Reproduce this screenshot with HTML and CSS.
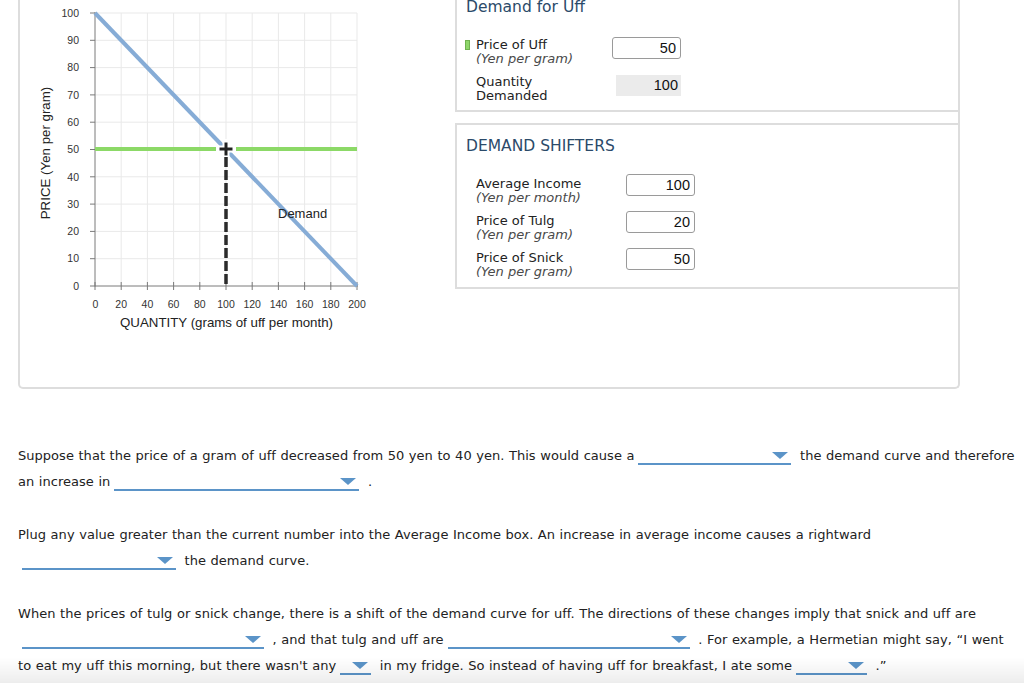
FILE: index.html
```html
<!DOCTYPE html>
<html lang="en">
<head>
<meta charset="utf-8">
<title>Demand for Uff</title>
<link rel="stylesheet" href="styles.css">
</head>
<body>
<div class="page">
  <div class="panel">
    <div class="chart">
      <svg width="435" height="387" viewBox="20 0 435 387" xmlns="http://www.w3.org/2000/svg">
        <g class="grid">
          <line x1="121.2" y1="13" x2="121.2" y2="286"/>
          <line x1="147.4" y1="13" x2="147.4" y2="286"/>
          <line x1="173.6" y1="13" x2="173.6" y2="286"/>
          <line x1="199.8" y1="13" x2="199.8" y2="286"/>
          <line x1="226" y1="13" x2="226" y2="286"/>
          <line x1="252.2" y1="13" x2="252.2" y2="286"/>
          <line x1="278.4" y1="13" x2="278.4" y2="286"/>
          <line x1="304.6" y1="13" x2="304.6" y2="286"/>
          <line x1="330.8" y1="13" x2="330.8" y2="286"/>
          <line x1="357" y1="13" x2="357" y2="286"/>
          <line x1="95" y1="13" x2="357" y2="13"/>
          <line x1="95" y1="40.3" x2="357" y2="40.3"/>
          <line x1="95" y1="67.6" x2="357" y2="67.6"/>
          <line x1="95" y1="94.9" x2="357" y2="94.9"/>
          <line x1="95" y1="122.2" x2="357" y2="122.2"/>
          <line x1="95" y1="149.5" x2="357" y2="149.5"/>
          <line x1="95" y1="176.8" x2="357" y2="176.8"/>
          <line x1="95" y1="204.1" x2="357" y2="204.1"/>
          <line x1="95" y1="231.4" x2="357" y2="231.4"/>
          <line x1="95" y1="258.7" x2="357" y2="258.7"/>
        </g>
        <g class="axis">
          <line x1="95" y1="12" x2="95" y2="286.5"/>
          <line x1="95" y1="286" x2="358" y2="286"/>
          <line x1="90" y1="13" x2="95" y2="13"/>
          <line x1="90" y1="40.3" x2="95" y2="40.3"/>
          <line x1="90" y1="67.6" x2="95" y2="67.6"/>
          <line x1="90" y1="94.9" x2="95" y2="94.9"/>
          <line x1="90" y1="122.2" x2="95" y2="122.2"/>
          <line x1="90" y1="149.5" x2="95" y2="149.5"/>
          <line x1="90" y1="176.8" x2="95" y2="176.8"/>
          <line x1="90" y1="204.1" x2="95" y2="204.1"/>
          <line x1="90" y1="231.4" x2="95" y2="231.4"/>
          <line x1="90" y1="258.7" x2="95" y2="258.7"/>
          <line x1="90" y1="286" x2="95" y2="286"/>
          <line x1="95" y1="282" x2="95" y2="290"/>
          <line x1="121.2" y1="282" x2="121.2" y2="290"/>
          <line x1="147.4" y1="282" x2="147.4" y2="290"/>
          <line x1="173.6" y1="282" x2="173.6" y2="290"/>
          <line x1="199.8" y1="282" x2="199.8" y2="290"/>
          <line x1="226" y1="282" x2="226" y2="290"/>
          <line x1="252.2" y1="282" x2="252.2" y2="290"/>
          <line x1="278.4" y1="282" x2="278.4" y2="290"/>
          <line x1="304.6" y1="282" x2="304.6" y2="290"/>
          <line x1="330.8" y1="282" x2="330.8" y2="290"/>
          <line x1="357" y1="282" x2="357" y2="290"/>
        </g>
        <g class="ticks-y">
          <text x="79" y="16.7">100</text>
          <text x="79" y="44">90</text>
          <text x="79" y="71.3">80</text>
          <text x="79" y="98.6">70</text>
          <text x="79" y="125.9">60</text>
          <text x="79" y="153.2">50</text>
          <text x="79" y="180.5">40</text>
          <text x="79" y="207.8">30</text>
          <text x="79" y="235.1">20</text>
          <text x="79" y="262.4">10</text>
          <text x="79" y="289.7">0</text>
        </g>
        <g class="ticks-x">
          <text x="95.5" y="307.5">0</text>
          <text x="121.2" y="307.5">20</text>
          <text x="147.4" y="307.5">40</text>
          <text x="173.6" y="307.5">60</text>
          <text x="199.8" y="307.5">80</text>
          <text x="226" y="307.5">100</text>
          <text x="252.2" y="307.5">120</text>
          <text x="278.4" y="307.5">140</text>
          <text x="304.6" y="307.5">160</text>
          <text x="330.8" y="307.5">180</text>
          <text x="357" y="307.5">200</text>
        </g>
        <text class="axis-title" x="226.5" y="326.5">QUANTITY (grams of uff per month)</text>
        <text class="axis-title" transform="translate(50 153) rotate(-90)">PRICE (Yen per gram)</text>
        <line class="demand" x1="95" y1="13" x2="357" y2="286"/>
        <line class="price" x1="95" y1="149" x2="357" y2="149"/>
        <text class="curve-label" x="278" y="217.5">Demand</text>
        <line class="halo" x1="216" y1="149" x2="236" y2="149"/>
        <line class="halo" x1="226" y1="139" x2="226" y2="159"/>
        <line class="dash" x1="226" y1="157" x2="226" y2="286"/>
        <line class="cross" x1="219.5" y1="149" x2="232.5" y2="149"/>
        <line class="cross" x1="226" y1="142.5" x2="226" y2="155.5"/>
      </svg>
    </div>
    <div class="side">
      <section class="box box-uff">
        <h2 class="box-title">Demand for Uff</h2>
        <div class="row row-first">
          <div class="label label-wide label-price marked">
            <span class="name">Price of Uff</span>
            <span class="unit">(Yen per gram)</span>
          </div>
          <input class="num" type="text" value="50">
        </div>
        <div class="row row-qty">
          <div class="label label-wide label-qty">
            <span class="name">Quantity</span>
            <span class="name name-second">Demanded</span>
          </div>
          <div class="readout">100</div>
        </div>
      </section>
      <section class="box box-shift">
        <h2 class="box-title">DEMAND SHIFTERS</h2>
        <div class="row row-first">
          <div class="label label-shift">
            <span class="name">Average Income</span>
            <span class="unit">(Yen per month)</span>
          </div>
          <input class="num" type="text" value="100">
        </div>
        <div class="row row-next">
          <div class="label label-shift">
            <span class="name">Price of Tulg</span>
            <span class="unit">(Yen per gram)</span>
          </div>
          <input class="num" type="text" value="20">
        </div>
        <div class="row row-next">
          <div class="label label-shift">
            <span class="name">Price of Snick</span>
            <span class="unit">(Yen per gram)</span>
          </div>
          <input class="num" type="text" value="50">
        </div>
      </section>
    </div>
  </div>

  <div class="questions">
    <p>Suppose that the price of a gram of uff decreased from 50 yen to 40 yen. This would cause a<span class="dd dd-153"><svg viewBox="0 0 16 7"><polygon points="0,0 16,0 8,7"/></svg></span> the demand curve and therefore an increase in<span class="dd dd-245"><svg viewBox="0 0 16 7"><polygon points="0,0 16,0 8,7"/></svg></span> .</p>
    <p>Plug any value greater than the current number into the Average Income box. An increase in average income causes a rightward <span class="dd dd-154"><svg viewBox="0 0 16 7"><polygon points="0,0 16,0 8,7"/></svg></span> the demand curve.</p>
    <p>When the prices of tulg or snick change, there is a shift of the demand curve for uff. The directions of these changes imply that snick and uff are <span class="dd dd-242"><svg viewBox="0 0 16 7"><polygon points="0,0 16,0 8,7"/></svg></span> , and that tulg and uff are<span class="dd dd-242"><svg viewBox="0 0 16 7"><polygon points="0,0 16,0 8,7"/></svg></span> . For example, a Hermetian might say, “I went to eat my uff this morning, but there wasn't any<span class="dd dd-31"><svg viewBox="0 0 16 7"><polygon points="0,0 16,0 8,7"/></svg></span> in my fridge. So instead of having uff for breakfast, I ate some<span class="dd dd-71"><svg viewBox="0 0 16 7"><polygon points="0,0 16,0 8,7"/></svg></span> .”</p>
  </div>
</div>
<div class="bottom-shade"></div>
</body>
</html>
```
FILE: styles.css
```css
html, body {
  margin: 0;
  padding: 0;
  background: #ffffff;
}

body {
  font-family: "DejaVu Sans", Verdana, sans-serif;
  color: #222222;
}

.page {
  padding: 0 4px 0 18px;
}

/* ---------- top panel ---------- */
.panel {
  width: 942px;
  height: 389px;
  box-sizing: border-box;
  border: 2px solid #dddddd;
  border-top: 0;
  border-radius: 0 0 5px 5px;
  display: flex;
}

.chart svg {
  display: block;
}

.grid line {
  stroke: #e9e9e9;
  stroke-width: 1;
}

.axis line {
  stroke: #7a7a7a;
  stroke-width: 1;
}

.ticks-y text,
.ticks-x text {
  font-family: "Liberation Sans", Arial, sans-serif;
  font-size: 10.5px;
  fill: #333333;
}

.ticks-y text {
  text-anchor: end;
}

.ticks-x text {
  text-anchor: middle;
}

.axis-title {
  font-family: "Liberation Sans", Arial, sans-serif;
  font-size: 13.3px;
  fill: #222222;
  text-anchor: middle;
}

.curve-label {
  font-family: "Liberation Sans", Arial, sans-serif;
  font-size: 13px;
  fill: #222222;
}

.demand {
  stroke: #86acd6;
  stroke-width: 4;
}

.price {
  stroke: #8cd967;
  stroke-width: 4;
}

.halo {
  stroke: #ffffff;
  stroke-width: 7;
}

.dash {
  stroke: #2b2b2b;
  stroke-width: 3.5;
  stroke-dasharray: 10 3;
}

.cross {
  stroke: #222222;
  stroke-width: 3;
}

/* ---------- right column ---------- */
.side {
  width: 503px;
}

.box {
  box-sizing: border-box;
  border: 2px solid #dddddd;
  border-right: 0;
}

.box-uff {
  border-top: 0;
  height: 114px;
}

.box-shift {
  margin-top: 11px;
  height: 166px;
  padding-top: 12px;
}

.box-title {
  margin: 0 0 0 9px;
  font-size: 15.5px;
  line-height: 18px;
  font-weight: normal;
  color: #2b4a69;
}

.box-uff .box-title {
  margin-top: -2px;
}

.row {
  display: flex;
  align-items: flex-start;
  height: 22px;
  padding-left: 19px;
}

.box-uff .row-first {
  margin-top: 21px;
}

.box-uff .row-qty {
  margin-top: 16px;
}

.box-shift .row-first {
  margin-top: 19px;
}

.box-shift .row-next {
  margin-top: 15px;
}

.label {
  font-size: 13px;
  position: relative;
  flex: none;
}

.label-wide {
  width: 136px;
}

.label-price {
  margin-top: 2px;
}

.label-shift {
  width: 150px;
  margin-top: 4px;
}

.label-qty {
  margin-top: 1px;
}

.name,
.unit {
  display: block;
  line-height: 12px;
  white-space: nowrap;
}

.name {
  color: #222222;
}

.name-second {
  margin-top: 1.5px;
}

.unit {
  margin-top: 1.5px;
  font-style: italic;
  color: #4a4a4a;
}

.marked::before {
  content: "";
  position: absolute;
  left: -11px;
  top: 1px;
  width: 3px;
  height: 8px;
  background: #8ed66a;
  border: 1px solid #6fb14f;
}

.num {
  flex: none;
  width: 69px;
  height: 22px;
  box-sizing: border-box;
  margin: 0;
  padding: 0 4px 0 2px;
  border: 1px solid #9a9a9a;
  border-radius: 3px;
  background: #ffffff;
  font-family: "Liberation Sans", Arial, sans-serif;
  font-size: 14.5px;
  color: #111111;
  text-align: right;
}

.readout {
  flex: none;
  width: 65px;
  height: 21px;
  margin-left: 4px;
  box-sizing: border-box;
  padding-right: 3px;
  background: #ebebeb;
  font-family: "Liberation Sans", Arial, sans-serif;
  font-size: 14.5px;
  line-height: 21px;
  color: #111111;
  text-align: right;
}

/* ---------- questions ---------- */
.questions {
  padding-top: 54px;
}

.questions p {
  margin: 0 0 27px;
  font-size: 13px;
  line-height: 26px;
  letter-spacing: 0.03px;
  word-spacing: 0.4px;
  color: #222222;
}

.dd {
  display: inline-block;
  vertical-align: -5px;
  height: 14px;
  box-sizing: border-box;
  margin: 0 4px;
  border-bottom: 2px solid #5b94c8;
}

.dd svg {
  display: block;
  width: 16px;
  height: 7px;
  margin: 1px 3px 0 auto;
  fill: #5b94c8;
}

.dd-153 { width: 153px; }
.dd-245 { width: 245px; }
.dd-154 { width: 154px; }
.dd-242 { width: 242px; }
.dd-31 { width: 31px; }
.dd-71 { width: 71px; }

.bottom-shade {
  position: fixed;
  left: 0;
  right: 0;
  bottom: 0;
  height: 26px;
  pointer-events: none;
  background: linear-gradient(to bottom, rgba(0, 0, 0, 0), rgba(0, 0, 0, 0.07));
}
```
